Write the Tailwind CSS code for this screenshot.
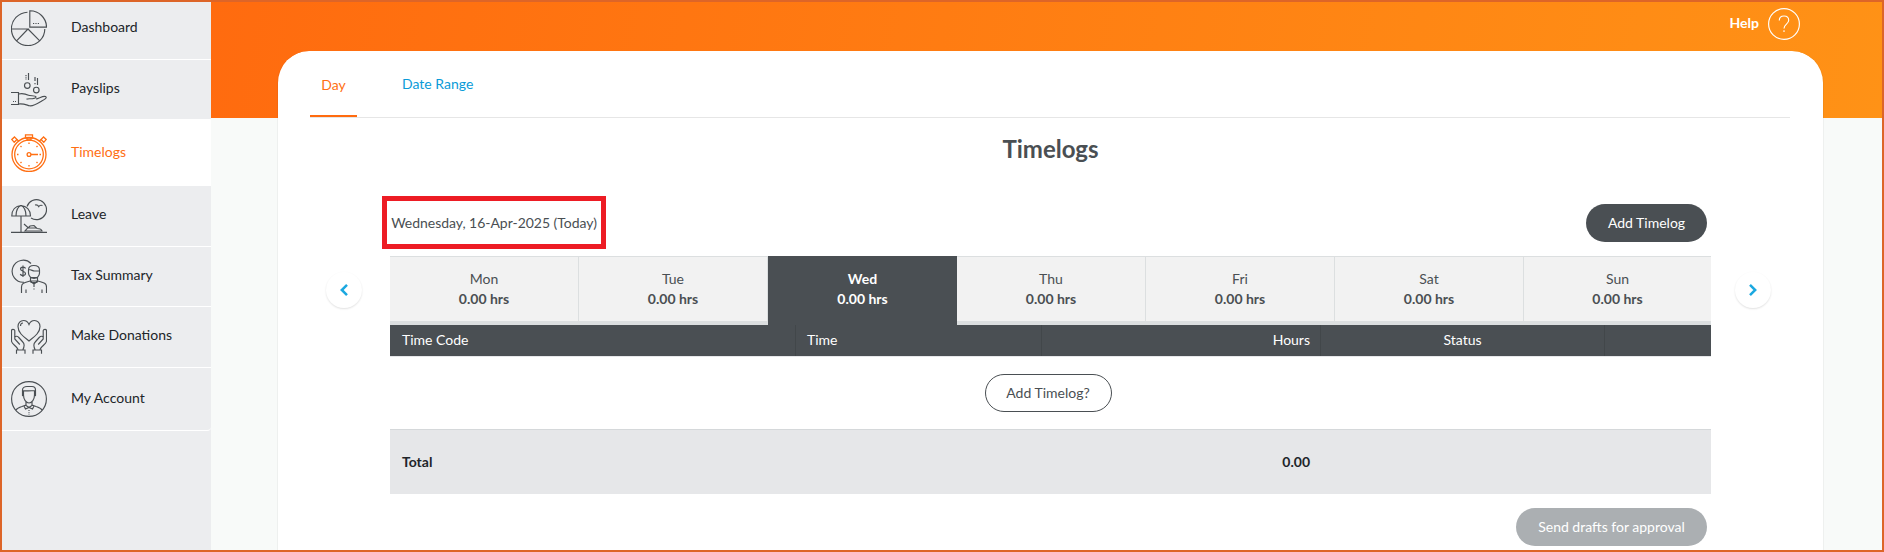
<!DOCTYPE html>
<html lang="en">
<head>
    <meta charset="UTF-8">
    <meta name="viewport" content="width=device-width, initial-scale=1.0">
    <title>Timelogs</title>
    <script src="https://cdn.jsdelivr.net/npm/@tailwindcss/browser@4"></script>
</head>
<body class="font-['Lato',sans-serif] text-[14px] leading-5 text-[#4a4f53]">
    <div class="flex w-[1884px] h-[552px] overflow-hidden border-2 border-[#dd6528] bg-[#f8faf9]">
        <!-- Sidebar -->
        <nav class="w-[209px] shrink-0 bg-[#ecedef] text-[#212529]">
            <a class="flex items-start gap-6 h-[58px] pl-[9px] pt-2 border-b border-white">
                <svg class="w-9 h-9 shrink-0 text-[#4a4f53]" viewBox="0 0 36 36" fill="none" stroke="currentColor" stroke-width="1.15">
                    <path d="M16.5 2.2A16.7 16.7 0 1 0 33.8 19M.5 19H17L5.8 30.6M17 19l11.5 11.6M18.8.8v16.4h16.7A16.5 16.5 0 0 0 18.8.8z"/>
                    <path d="M22 13.5h6" stroke-dasharray="1.2 1.2"/>
                </svg>
                <span class="mt-[7px]">Dashboard</span>
            </a>
            <a class="flex items-start gap-6 h-[60px] pl-[9px] pt-3 border-b border-white">
                <svg class="w-9 h-9 shrink-0 text-[#4a4f53]" viewBox="0 0 36 36" fill="none" stroke="currentColor" stroke-width="1.15">
                    <circle cx="16.3" cy="13.5" r="2.8"/>
                    <circle cx="25.3" cy="18" r="2.8"/>
                    <path d="M17.5 1v7M24 5v4M26.5 6v7"/>
                    <path d="M15 3v5M24 11v2" stroke-dasharray="1.2 1"/>
                    <path d="M0 20.5h7.5v12H0M7.5 22c5-1 8 .3 10 1.3 2 1 7-.3 7.5 1.6 0 2.5-8.5 1.5-9.5 2.3M25 27c3-.5 7-3.5 9.5-2.5 2.5 1.3-2 3.500-5 5.3-4 2.5-8 4.5-11 4-3-.8-6-2.5-11-1.8"/>
                    <path d="M2 29.5h4" stroke-dasharray="1 1"/>
                </svg>
                <span class="mt-[6px]">Payslips</span>
            </a>
            <a class="flex items-start gap-6 h-[66px] pl-[9px] pt-[14px] bg-white text-[#ff6f13]">
                <svg class="w-9 h-[38px] shrink-0" viewBox="0 0 36 38" fill="none" stroke="currentColor" stroke-width="1.3">
                    <circle cx="18" cy="20.5" r="17"/>
                    <circle cx="18" cy="20.5" r="14.3"/>
                    <circle cx="18" cy="20.5" r="1.9"/>
                    <path d="M20 20.5h7M14.5.8h7v3.2h-7zM16 4v2h4V4"/>
                    <path d="M3.5 3l2.5 2.5-2.8 2.8L.8 5.5zM6 5.5l2 2M32.5 3L30 5.5l2.8 2.8 2.4-2.8zM30 5.5l-2 2"/>
                    <path d="M18 8.5V10M18 31v1.5M6 20.5h1.5M28.5 20.5H30M9.500 12l1 1M26.500 12l-1 1M9.500 29l1-1M26.500 29l-1-1"/>
                </svg>
                <span class="mt-[8px]">Timelogs</span>
            </a>
            <a class="flex items-start gap-6 h-[61px] pl-[9px] pt-3 border-b border-white">
                <svg class="w-9 h-9 shrink-0 text-[#4a4f53]" viewBox="0 0 36 36" fill="none" stroke="currentColor" stroke-width="1.15">
                    <path d="M16 8.5A10 10 0 1 1 20 20M24 7c2-.5 3 .2 3.8 1.6C28.500 7.200 30 7 31.500 7.500"/>
                    <path d="M10 7.5C4.500 8 .8 12 .8 18h18.700c0-6-4-10-9.500-10.500zM10 7.500C6.500 9 5 13 5 18M10 7.500c3.500 1.500 5 5.500 5 10.500M10 18v16"/>
                    <path d="M0 34.4h36" stroke-width="1.3"/>
                    <path d="M13 26l4 3.5-3 3.5h17c-.5-2-3-2.500-5-2.500l-3-3-4 .5-2 2h8"/>
                </svg>
                <span class="mt-[6px]">Leave</span>
            </a>
            <a class="flex items-start gap-6 h-[60px] pl-[9px] pt-3 border-b border-white">
                <svg class="w-9 h-9 shrink-0 text-[#4a4f53]" viewBox="0 0 36 36" fill="none" stroke="currentColor" stroke-width="1.15">
                    <path d="M20 4.5A11 11 0 1 0 13 23.2"/>
                    <path d="M14.500 9.500c-.5-2-5-2-5 .5s5 2 5 4.500-4.500 2.800-5.200.5M12 6.500v11.500"/>
                    <path d="M17.500 11c0-3 2-4.500 5.300-4.500S28.500 8 28.500 11v3c0 3-2.500 5.500-5.500 5.500S17.500 17 17.500 14zM17.500 10.500c3 0 4 1.500 6 1.500h5M19.500 18.500h7M19.500 18.500v3.500M26.500 18.500v3.500"/>
                    <path d="M10.500 34v-6c0-4 3.500-4.500 8.500-6h8c5 1.500 8.500 2 8.500 6v6M15 30.500V34M31 30.500V34M19 22l4 3 4-3M19.500 23.500h7M23 25v3M23 29.500v1"/>
                </svg>
                <span class="mt-[6px]">Tax Summary</span>
            </a>
            <a class="flex items-start gap-6 h-[61px] pl-[9px] pt-3 border-b border-white">
                <svg class="w-9 h-9 shrink-0 text-[#4a4f53]" viewBox="0 0 36 36" fill="none" stroke="currentColor" stroke-width="1.15">
                    <path d="M18 22C13 18 7 14 7 7.500 7 4 9.500 1.500 12.500 1.500S17 3 18 5.500c1-2.500 2.500-4 5.500-4S29 4 29 7.500C29 14 23 18 18 22zM9.500 7c0-2 1-3 2.500-3"/>
                    <path d="M5.500 34.800V31h8.500v3.800M7 31c0-3-6.500-6-6.500-9V11.500c0-1.500 3-1.500 3.300 0V20l5 5.500M3.800 18c1.500-1.500 3-.5 4 .5l4 4.500c1.500 1.500 1.500 5 0 8"/>
                    <path d="M30.500 34.800V31H22v3.800M29 31c0-3 6.500-6 6.500-9V11.500c0-1.500-3-1.500-3.300 0V20l-5 5.500M32.200 18c-1.500-1.500-3-.5-4 .5l-4 4.500c-1.500 1.500-1.500 5 0 8"/>
                </svg>
                <span class="mt-[6px]">Make Donations</span>
            </a>
            <a class="flex items-start gap-6 h-[63px] pl-[9px] pt-[13px] border-b border-white rounded-br-[4px]">
                <svg class="w-9 h-9 shrink-0 text-[#4a4f53]" viewBox="0 0 36 36" fill="none" stroke="currentColor" stroke-width="1.15">
                    <circle cx="18" cy="18" r="17.4"/>
                    <path d="M12.500 14l-1-5c0-2 2-3.500 4.500-3.500h5c2.500 0 3.500 1.500 3.500 3.500l-1 5M12.500 14V9.800c3 .5 5-.3 11 0V14c0 4.500-2.500 8-5.500 8s-5.500-3.500-5.500-8zM11.500 9v5.500l1.500 1M24.500 9v5.500l-1.500 1"/>
                    <path d="M15 21v3.500l3 2 3-2V21M15 24l-4 1.500C8 26.500 6 27 5 29M21 24l4 1.500c3 1 5 1.500 6 3.500M13 25l1.500 3 3.500-1.500 3.500 1.500 1.500-3"/>
                    <path d="M18 29v5" stroke-dasharray="1 1.2"/>
                </svg>
                <span class="mt-[7px]">My Account</span>
            </a>
        </nav>

        <!-- Content -->
        <main class="flex-1 bg-[linear-gradient(100deg,#ff6b0f,#ff9216)] bg-[length:100%_116px] bg-no-repeat">
            <div class="flex justify-end items-start gap-[9px] h-[49px] pr-[82px] pt-[6px] text-white">
                <span class="mt-[5px] font-bold">Help</span>
                <svg class="size-8" viewBox="0 0 32 32" fill="none" stroke="currentColor" stroke-width="1.15">
                    <circle cx="16" cy="16" r="15.4"/>
                    <path d="M11.300 12.500c0-3 2-4.500 4.700-4.500s4.700 1.500 4.700 4.200c0 4-4.700 3.800-4.700 8.300M16 22.300v1.700"/>
                </svg>
            </div>
            <section class="ml-[66px] w-[1547px] h-[520px] border-x border-black/4 bg-white bg-clip-padding rounded-t-[32px]">
                <div class="flex ml-8 w-[1480px] h-[67px] border-b border-[#e6e6e6]">
                    <a class="w-[47px] h-[66px] pt-6 text-center text-[#ff6f13] border-b-2 border-[#ff6b0f]">Day</a>
                    <a class="ml-[45px] pt-[23px] text-[#0a9bd8]">Date Range</a>
                </div>
                <h1 class="ml-[112px] w-[1321px] mt-[15px] text-center text-[24px] leading-8 font-bold">Timelogs</h1>
                <div class="flex justify-between ml-[104px] w-[1325px] mt-[31px]">
                    <div class="flex items-center justify-center w-[224px] h-[53px] border-[5px] border-[#ed1c24] tracking-[-0.03px]">Wednesday, 16-Apr-2025 (Today)</div>
                    <button class="mt-2 w-[121px] h-[38px] rounded-full bg-[#4a4f53] text-white">Add Timelog</button>
                </div>
                <div class="flex mt-[7px] ml-[48px]">
                    <button class="flex items-center justify-center mt-4 size-9 rounded-full shadow-[0_1px_2px_rgba(0,0,0,0.12)] text-[#1ba8e0]">
                        <svg class="w-3 h-[14px]" viewBox="0 0 12 14" fill="none" stroke="currentColor" stroke-width="2.5"><path d="M9 1.8L3.800 7 9 12.200"/></svg>
                    </button>
                    <div class="ml-7 w-[1321px]">
                        <div class="grid grid-cols-[repeat(6,189px)_187px] h-[69px] text-center">
                            <div class="pt-3 bg-[#f2f2f2] border-t border-t-[#dcdfe0] border-b-4 border-b-[#dcdfe0] border-r border-r-[#dcdfe0]">Mon<br><b>0.00 hrs</b></div>
                            <div class="pt-3 bg-[#f2f2f2] border-t border-t-[#dcdfe0] border-b-4 border-b-[#dcdfe0] border-r border-r-[#dcdfe0]">Tue<br><b>0.00 hrs</b></div>
                            <div class="pt-[13px] bg-[#4a4f53] text-white font-bold">Wed<br>0.00 hrs</div>
                            <div class="pt-3 bg-[#f2f2f2] border-t border-t-[#dcdfe0] border-b-4 border-b-[#dcdfe0] border-r border-r-[#dcdfe0]">Thu<br><b>0.00 hrs</b></div>
                            <div class="pt-3 bg-[#f2f2f2] border-t border-t-[#dcdfe0] border-b-4 border-b-[#dcdfe0] border-r border-r-[#dcdfe0]">Fri<br><b>0.00 hrs</b></div>
                            <div class="pt-3 bg-[#f2f2f2] border-t border-t-[#dcdfe0] border-b-4 border-b-[#dcdfe0] border-r border-r-[#dcdfe0]">Sat<br><b>0.00 hrs</b></div>
                            <div class="pt-3 bg-[#f2f2f2] border-t border-t-[#dcdfe0] border-b-4 border-b-[#dcdfe0]">Sun<br><b>0.00 hrs</b></div>
                        </div>
                        <div class="grid grid-cols-[406px_246px_279px_284px_1fr] h-[31px] leading-[30px] bg-[#4a4f53] text-white">
                            <div class="pl-3 border-r border-[#42474a]">Time Code</div>
                            <div class="pl-[11px] border-r border-[#42474a]">Time</div>
                            <div class="pr-[10px] text-right border-r border-[#42474a]">Hours</div>
                            <div class="text-center border-r border-[#42474a]">Status</div>
                            <div></div>
                        </div>
                        <div class="h-[73px] pt-[17px] border-t border-[#e6e7e9] text-center">
                            <button class="mr-[5px] w-[127px] h-[38px] rounded-full border border-[#4a4f53]">Add Timelog?</button>
                        </div>
                        <div class="flex items-center h-[65px] pl-3 border-t border-[#d5d8da] bg-[#e6e7e9] font-bold text-[#212529]">
                            <span>Total</span>
                            <span class="ml-auto mr-[401px]">0.00</span>
                        </div>
                        <div class="flex justify-end pt-[14px] pr-1">
                            <button class="w-[191px] h-[38px] rounded-full bg-[#abafb2] text-white">Send drafts for approval</button>
                        </div>
                    </div>
                    <button class="flex items-center justify-center mt-4 ml-6 size-9 rounded-full shadow-[0_1px_2px_rgba(0,0,0,0.12)] text-[#1ba8e0]">
                        <svg class="w-3 h-[14px]" viewBox="0 0 12 14" fill="none" stroke="currentColor" stroke-width="2.5"><path d="M3 1.800L8.200 7 3 12.200"/></svg>
                    </button>
                </div>
            </section>
        </main>
    </div>
</body>
</html>
